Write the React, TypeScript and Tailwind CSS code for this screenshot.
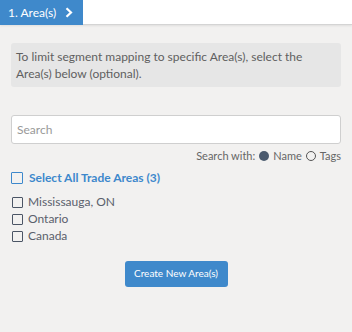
import React from "react";

export default function App() {
  const items = ["Mississauga, ON", "Ontario", "Canada"];
  return (
    <div className="w-[352px] h-[332px] bg-[#f2f1f0] text-[#555] overflow-hidden" style={{ fontFamily: "Lato, 'Open Sans', sans-serif" }}>
      <div className="h-[25px] bg-white flex border-b border-[#d4d4d4] shadow-[0_1px_2px_rgba(0,0,0,0.08)]">
        <div className="w-[83px] h-[25px] bg-[#3f89cb] text-white text-[12px] flex items-center pl-[8px] gap-[9px]">
          <span>1. Area(s)</span>
          <svg width="8" height="11" viewBox="0 0 8 11"><path d="M1.5 1.2 L6 5.5 L1.5 9.8" stroke="white" strokeWidth="2.2" fill="none" /></svg>
        </div>
      </div>
      <div className="px-[11px] pt-[18px]">
        <div className="h-[44px] bg-[#e6e6e6] rounded-[3px] px-[5px] pt-[5px] text-[12px] leading-[17px] text-[#5f5f5f]">
          To limit segment mapping to specific Area(s), select the Area(s) below (optional).
        </div>
        <div className="mt-[28px] h-[29px] bg-white border border-[#cfcfcf] rounded-[3px] flex items-center px-[5px] text-[12px] text-[#999]">
          Search
        </div>
        <div className="mt-[4px] flex justify-end items-center text-[11px] text-[#666] gap-[4px]">
          <span>Search with:</span>
          <span className="w-[10px] h-[10px] rounded-full bg-[#4b5a6e] inline-block"></span>
          <span>Name</span>
          <span className="w-[10px] h-[10px] rounded-full border border-[#555] inline-block"></span>
          <span>Tags</span>
        </div>
        <div className="mt-[5px] flex items-center gap-[6px] h-[16px]">
          <span className="w-[12px] h-[12px] border-[1.5px] border-[#3d88cc] rounded-[1px] inline-block"></span>
          <span className="text-[12px] font-bold text-[#3d88cc]">Select All Trade Areas (3)</span>
        </div>
        <div className="mt-[8px] flex flex-col">
          {items.map((it) => (
            <div key={it} className="flex items-center gap-[5px] h-[17px] pl-[1px]">
              <span className="w-[11px] h-[11px] border border-[#4b5565] rounded-[1px] inline-block"></span>
              <span className="text-[12px] text-[#5a606c]">{it}</span>
            </div>
          ))}
        </div>
        <div className="flex justify-center mt-[16px]">
          <div className="w-[103px] h-[26px] bg-[#3f89cb] rounded-[3px] text-white text-[10px] flex items-center justify-center">
            Create New Area(s)
          </div>
        </div>
      </div>
    </div>
  );
}
